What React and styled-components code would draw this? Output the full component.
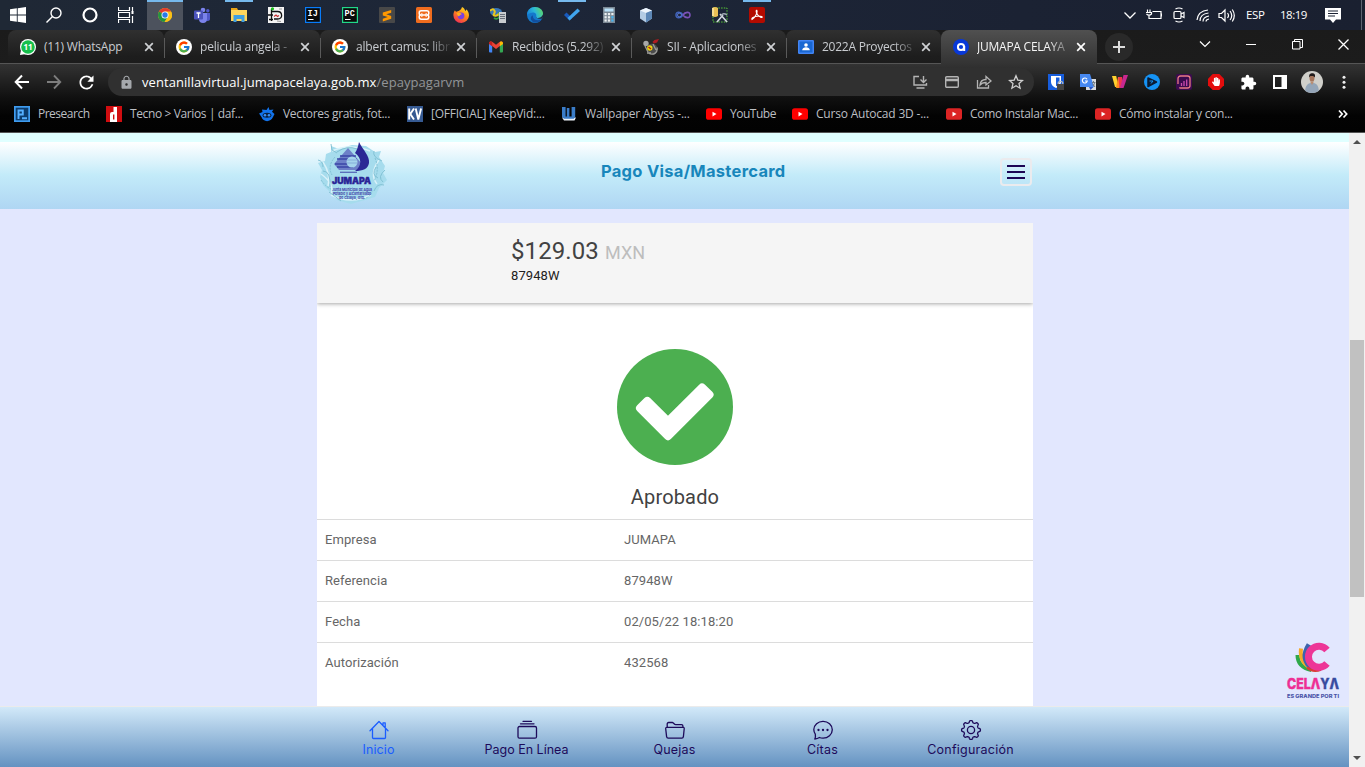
import React from "react";
import styled, { createGlobalStyle, css } from "styled-components";
import { FcGoogle } from "react-icons/fc";
import { FaHandPaper } from "react-icons/fa";
import { MdExtension, MdLock, MdRefresh } from "react-icons/md";

const Global = createGlobalStyle`
  *, *::before, *::after { box-sizing: border-box; }
  body { margin: 0; overflow: hidden; background: #e2e7fe; }
  svg { display: block; flex: none; }
`;

const ui = css`
  font-family: "Open Sans", "Noto Sans", sans-serif;
  white-space: nowrap;
`;

const Screen = styled.div`
  width: 1365px;
  height: 767px;
  display: flex;
  flex-direction: column;
  overflow: hidden;
`;

/* ---------- taskbar ---------- */

const Taskbar = styled.div`
  ${ui}
  flex: none;
  height: 30px;
  display: flex;
  background: linear-gradient(90deg, #1f2835, #1d2638 40%, #1b2233 75%, #1a2030);
  color: #fff;
`;

const SystemButtons = styled.div`
  display: flex;
  width: 147px;
`;

const TaskCell = styled.div`
  width: ${(p) => p.$w || 36}px;
  height: 30px;
  display: flex;
  align-items: center;
  justify-content: center;
`;

const AppCell = styled.div`
  position: relative;
  width: 36px;
  height: 30px;
  margin-right: 1px;
  display: flex;
  align-items: center;
  justify-content: center;
  background: ${(p) => (p.$active ? "#4c525d" : "transparent")};
  &::before {
    content: "";
    display: ${(p) => (p.$running ? "block" : "none")};
    position: absolute;
    top: 0;
    left: ${(p) => (p.$active ? 0 : 4)}px;
    right: ${(p) => (p.$active ? 0 : 4)}px;
    height: 2px;
    background: #76b9ed;
  }
`;

const Tray = styled.div`
  margin-left: auto;
  display: flex;
  align-items: center;
  width: 247px;
`;

const TrayText = styled.span`
  width: ${(p) => p.$w}px;
  padding-left: ${(p) => p.$pad}px;
  font-size: 11.5px;
  letter-spacing: ${(p) => p.$ls}px;
  line-height: 30px;
`;

const DesktopEdge = styled.div`
  width: 1px;
  height: 30px;
  margin-left: 18px;
  background: #5d6370;
`;

/* ---------- browser tabs ---------- */

const TabStrip = styled.div`
  ${ui}
  flex: none;
  height: 34px;
  display: flex;
  padding-left: 8px;
  background: linear-gradient(#1b1b1b, #1c1c1c 97%, #555 97%);
`;

const Tab = styled.div`
  position: relative;
  flex: none;
  width: ${(p) => p.$w}px;
  height: ${(p) => (p.$active ? 34 : 33)}px;
  padding-left: 12px;
  display: flex;
  align-items: center;
  border-radius: 8px 8px 0 0;
  background: ${(p) =>
    p.$active
      ? "linear-gradient(#505050, #333)"
      : "linear-gradient(#303030, #1d1d1d 80%, #1c1c1c)"};
  color: ${(p) => (p.$active ? "#f4f4f4" : "#c9ccd0")};
  &::after {
    content: "";
    display: ${(p) => (p.$rule ? "block" : "none")};
    position: absolute;
    right: -1px;
    top: 8px;
    width: 1px;
    height: 20px;
    background: #5a5a5a;
    z-index: 1;
  }
`;

const TabTitle = styled.span`
  width: ${(p) => p.$w}px;
  margin-left: 8px;
  overflow: hidden;
  font-size: 12px;
  letter-spacing: ${(p) => p.$ls}px;
  line-height: 34px;
  mask-image: ${(p) =>
    p.$fade ? "linear-gradient(90deg, #000 76%, transparent 102%)" : "none"};
`;

const TabClose = styled.span`
  width: 18px;
  height: 34px;
  margin-left: 1px;
  display: flex;
  align-items: center;
  justify-content: center;
`;

const NewTab = styled.div`
  width: 28px;
  height: 28px;
  margin: 3px 0 0 8px;
  border-radius: 50%;
  background: #292929;
  display: flex;
  align-items: center;
  justify-content: center;
`;

const WindowButtons = styled.div`
  margin: 0 -1px 0 auto;
  height: 28px;
  display: flex;
  align-items: center;
`;

const WindowButton = styled.div`
  width: 46px;
  display: flex;
  align-items: center;
  justify-content: center;
`;

/* ---------- toolbar ---------- */

const BrowserBars = styled.div`
  ${ui}
  flex: none;
  height: 69px;
  background: linear-gradient(#333, #101010 50%, #030303 76%, #020202);
  border-bottom: 1px solid #555;
`;

const Toolbar = styled.div`
  height: 36px;
  display: flex;
  align-items: center;
  padding-left: 6px;
`;

const ToolSlot = styled.div`
  width: 32px;
  height: 32px;
  display: flex;
  align-items: center;
  justify-content: center;
`;

const Omnibox = styled.div`
  width: 926px;
  height: 28px;
  margin: 0 6px;
  padding-left: 11px;
  border-radius: 14px;
  background: #303030;
  display: flex;
  align-items: center;
  color: #a5a8ac;
`;

const Url = styled.div`
  flex: 1;
  margin-left: 8px;
  font-size: 13px;
  letter-spacing: 0.06px;
  line-height: 28px;
  color: #929598;
  b {
    font-weight: 400;
    color: #fff;
  }
`;

const OmniActions = styled.div`
  display: flex;
  padding-right: 2px;
`;

const Avatar = styled.div`
  width: 22px;
  height: 22px;
  border-radius: 50%;
  overflow: hidden;
`;

const Bookmarks = styled.div`
  height: 32px;
  display: flex;
  align-items: center;
  padding: 0 17px 2px 14px;
  margin-top: -1px;
`;

const Bookmark = styled.div`
  width: ${(p) => p.$w}px;
  display: flex;
  align-items: center;
  gap: 8px;
  color: #bcbfc3;
  font-size: 12px;
  letter-spacing: ${(p) => p.$ls}px;
  line-height: 30px;
`;

const Overflow = styled.span`
  margin-left: auto;
`;

/* ---------- page ---------- */

const Viewport = styled.div`
  flex: 1;
  min-height: 0;
  display: flex;
`;

const Page = styled.div`
  flex: 1;
  display: flex;
  flex-direction: column;
  background: #e2e7fe;
  position: relative;
`;

const TopBand = styled.div`
  flex: none;
  height: 9px;
  background: #e0ffff;
`;

const Header = styled.header`
  flex: none;
  height: 67px;
  background: linear-gradient(#fff, #c3ebf9 49%, #afd6f3);
`;

const HeaderInner = styled.div`
  width: 716px;
  height: 67px;
  margin-left: calc(50% - 357.5px);
  display: flex;
`;

const LogoBox = styled.div`
  width: 72px;
  margin-top: -2px;
`;

const Title = styled.h1`
  margin: 0 0 0 212px;
  font: 700 16.5px/58px "Inter", sans-serif;
  letter-spacing: 0.28px;
  color: #1886bb;
  white-space: nowrap;
`;

const MenuButton = styled.div`
  width: 32px;
  height: 28px;
  margin: 16px 1px 0 auto;
  border: 2px solid #ebebee;
  border-radius: 4px;
  display: flex;
  flex-direction: column;
  align-items: center;
  justify-content: center;
  gap: 4px;
  i {
    width: 18px;
    height: 2px;
    background: #1b0555;
  }
`;

const Card = styled.main`
  flex: 1;
  width: 716px;
  margin: 14px 0 0 calc(50% - 357.5px);
  background: #fff;
  font-family: Roboto, sans-serif;
`;

const Amount = styled.section`
  height: 80px;
  padding: 13px 0 0 194px;
  background: #f5f5f5;
  box-shadow: 0 1px 4px rgba(0, 0, 0, 0.35);
  clip-path: inset(0 0 -8px 0);
`;

const Price = styled.div`
  font-size: 24px;
  line-height: 30px;
  letter-spacing: 0.1px;
  color: #424242;
  white-space: nowrap;
  small {
    font-size: 18px;
    letter-spacing: 0.1px;
    color: #bdbdbd;
  }
`;

const Account = styled.div`
  margin-top: -2px;
  font-size: 13px;
  line-height: 20px;
  letter-spacing: 0.1px;
  color: #212121;
`;

const Status = styled.section`
  height: 216px;
  display: flex;
  flex-direction: column;
  align-items: center;
  padding-top: 46px;
`;

const StatusText = styled.div`
  margin-top: 20px;
  font-size: 20px;
  line-height: 24px;
  letter-spacing: 0.15px;
  color: #424242;
`;

const Row = styled.div`
  height: 41px;
  border-top: 1px solid #dcdcdc;
  display: flex;
  padding-left: 8px;
  font-size: 13px;
  line-height: 40px;
  letter-spacing: 0.08px;
  color: #666;
`;

const RowLabel = styled.div`
  width: 299px;
`;

const CityBadge = styled.div`
  position: absolute;
  right: 8px;
  bottom: 65px;
`;

const BottomNav = styled.nav`
  flex: none;
  height: 60px;
  display: flex;
  justify-content: center;
  background: linear-gradient(#d2e9f9, #6492c1);
  box-shadow: 0 -1px 0 #ebebeb;
`;

const NavItem = styled.div`
  width: 148px;
  padding-top: 12px;
  display: flex;
  flex-direction: column;
  align-items: center;
  color: ${(p) => (p.$active ? "#1b5dff" : "#1d0a5a")};
  span {
    font: 400 12.5px/18px "Inter", sans-serif;
    letter-spacing: ${(p) => p.$ls}px;
    white-space: nowrap;
  }
`;

const Scrollbar = styled.div`
  width: 16px;
  background: #f1f1f1;
  display: flex;
  flex-direction: column;
  align-items: center;
  padding: 7px 0;
`;

const Thumb = styled.div`
  width: 14px;
  height: 257px;
  margin: 196px 0 auto;
  background: #c1c1c1;
`;

/* ---------- icons ---------- */

const Line = ({ d, s = 16, c = "#fff", w = 1.2, children }) => (
  <svg width={s} height={s} viewBox={`0 0 ${s} ${s}`} fill="none" stroke={c} strokeWidth={w}>
    {d && <path d={d} />}
    {children}
  </svg>
);

const Fill = ({ s = 16, children }) => (
  <svg width={s} height={s} viewBox="0 0 16 16">{children}</svg>
);

const Glyph = ({ children, size = 8, x = 8, y = 11, fill = "#fff", weight = 700, family = "Open Sans, sans-serif" }) => (
  <text x={x} y={y} fontSize={size} fill={fill} fontWeight={weight} textAnchor="middle" fontFamily={family}>
    {children}
  </text>
);

const Chrome = () => (
  <Fill s={14}>
    <circle cx="8" cy="8" r="8" fill="#fbc116" />
    <path d="M8 8 1.1 4A8 8 0 0 1 14.9 4Z" fill="#e33b2e" />
    <path d="M8 8 1.1 4A8 8 0 0 0 7.5 16L11.4 10Z" fill="#229342" />
    <path d="M8 4h6.9A8 8 0 0 1 7.5 16l3.9-6Z" fill="#fbc116" />
    <circle cx="8" cy="8" r="4" fill="#fff" />
    <circle cx="8" cy="8" r="3.1" fill="#2979e8" />
  </Fill>
);

const Teams = () => (
  <Fill>
    <circle cx="9" cy="3" r="2.3" fill="#7b83eb" />
    <circle cx="13.8" cy="3.8" r="1.7" fill="#5059c9" />
    <path d="M11 6h5v5a2.5 2.5 0 0 1-5 1Z" fill="#5059c9" />
    <path d="M5 6h8v6a4 4 0 0 1-8 0Z" fill="#7b83eb" />
    <rect x="0" y="3.5" width="9" height="9" rx="1" fill="#4b53bc" />
    <path d="M2.5 6h4M4.5 6v5" stroke="#fff" strokeWidth="1.3" />
  </Fill>
);

const Explorer = () => (
  <Fill>
    <path d="M0 1h6l1 2h8v4H0Z" fill="#e8a317" />
    <rect x="0" y="3" width="16" height="11" fill="#ffd65c" />
    <path d="M2.5 15V8h11v7h-3v-3h-5v3Z" fill="#3f9fe0" />
  </Fill>
);

const RApp = () => (
  <Fill>
    <rect width="16" height="16" fill="#f4f4f4" />
    <path d="M3 4.500h6.500c5 0 6 7.500 0 7.500H6M0 8h5M1 12.500h4M3.500 2v12" fill="none" stroke="#111" strokeWidth="1.300" />
    <path d="M6 9.500l2-1.500 1.500 1.500 1.500-1" stroke="#c83030" strokeWidth="1.200" fill="none" />
    <path d="M9 14l4 .5M11 2h3" stroke="#999" />
    <circle cx="4.500" cy="1.800" r="1.600" fill="#18c018" />
  </Fill>
);

const Ide = ({ label, color }) => (
  <Fill>
    <rect x=".6" y=".6" width="14.800" height="14.800" fill="#0a0a0a" stroke={color} strokeWidth="1.200" />
    <Glyph size={8.5} x={7.7} y={8.8} family="Liberation Mono, monospace">{label}</Glyph>
    <path d="M3 12.500h5.500" stroke="#fff" />
  </Fill>
);

const Sublime = () => (
  <Fill>
    <rect width="16" height="16" rx="1" fill="#484848" />
    <path d="M12.200 3 3.800 5.600v2.900l5 1.600-5 1.600v2.700l8.400-2.700V8.900L7.300 7.300l4.900-1.500Z" fill="#ff9800" />
  </Fill>
);

const Xampp = () => (
  <Fill>
    <rect width="16" height="16" rx="1.500" fill="#ef6c1e" />
    <path d="M5.200 3.800h5.600q2 0 2 2.100T11 8q1.800 0 1.800 2.100t-2 2.100H5.200q-2 0-2-2.100T5 8Q3.200 8 3.200 5.900t2-2.100Z" fill="none" stroke="#fff" strokeWidth="1.500" />
    <path d="M5.800 6.200v3.600M10.200 6.200v3.600M5.800 8h4.400" stroke="#fff" strokeWidth="1.300" />
  </Fill>
);

const Firefox = () => (
  <Fill>
    <defs>
      <linearGradient id="ff" x1=".8" y1="0" x2=".2" y2="1">
        <stop offset="0" stopColor="#ffe226" />
        <stop offset=".45" stopColor="#ff8a16" />
        <stop offset="1" stopColor="#f0285a" />
      </linearGradient>
    </defs>
    <path d="M9 0c2 1 3 2.500 3.200 4 1-.4 1-1.300 1-1.700C15 4 16 6 16 8.500A7.700 7.700 0 0 1 8.200 16 7.800 7.800 0 0 1 .4 8C.4 6 1 4.500 2 3.200c.3 1 .7 1.300 1.300 1.600C5 3.800 8 4 9 0Z" fill="url(#ff)" />
    <circle cx="8" cy="8.800" r="3.400" fill="#7b3fe0" />
    <path d="M3.500 6c2-.5 4 0 5.500 1.200-2 0-1.800 2-4 2Z" fill="#ffae1c" />
  </Fill>
);

const NetApp = () => (
  <Fill>
    <ellipse cx="6" cy="5" rx="6" ry="4" fill="#3776b8" />
    <path d="M0 4c3-4 6 0 4 3S9 9 9 6" fill="none" stroke="#eac71d" strokeWidth="2" />
    <path d="M4 11c3 2 7 0 5-6" fill="none" stroke="#30a640" strokeWidth="1.6" />
    <rect x="9" y="5" width="7" height="11" fill="#c8ccd0" />
    <path d="M10 7.500h5M10 9.500h5M10 11.500h5" stroke="#5c6470" strokeWidth=".9" />
  </Fill>
);

const Edge = () => (
  <Fill>
    <defs>
      <linearGradient id="edge" x1="0" y1=".6" x2="1" y2=".3">
        <stop offset="0" stopColor="#1683d8" />
        <stop offset=".5" stopColor="#2cb8d8" />
        <stop offset="1" stopColor="#5ed864" />
      </linearGradient>
    </defs>
    <circle cx="8" cy="8" r="8" fill="#1478cc" />
    <path d="M0 8C0 3.500 3.500 0 8 0s8 3 8 6.500S13 11 11 11s-2.200-1-1.800-1.800C10 7 8 5.400 5.800 5.400 2.500 5.400.3 7.800 0 8Z" fill="url(#edge)" />
    <path d="M6 8.500c-1 4 4 6 8.600 4C13 15 9 16.500 6 15 2.500 12.500 3.500 9 6 8.500Z" fill="#124f9f" />
    <path d="M9.200 9.200C8.700 10.300 10.500 12.300 15 11.400L16 10v-2.500C15 10 13 11 11 11s-2.200-1-1.800-1.800Z" fill="#1f2838" />
  </Fill>
);

const Todo = () => (
  <Fill>
    <path d="m0 8 2.500-2.500 5.500 5.500L5.500 13.500Z" fill="#185abd" />
    <path d="m5.500 13.500-2-2.500L13.500 1.500 16 4Z" fill="#41a5ee" />
  </Fill>
);

const Calculator = () => (
  <Fill>
    <rect x="2" y="0" width="12" height="16" fill="#7b8894" />
    <rect x="3.500" y="1.500" width="9" height="3" fill="#b9e1fa" />
    {[6, 9.2, 12.4].map((y) =>
      [3.5, 6.9, 10.3].map((x) => (
        <rect key={`${x}-${y}`} x={x} y={y} width="2.200" height="2.200" fill={x > 10 && y > 6 ? "#43b2f0" : "#eceff2"} />
      ))
    )}
  </Fill>
);

const VBox = () => (
  <Fill>
    <path d="M8 1l6 2.500v8L8 15.500 2 11.500v-8Z" fill="#b4cce4" />
    <path d="M8 1l6 2.500L8 6 2 3.500Z" fill="#eef5fc" />
    <path d="M8 6l6-2.500v8L8 15.500Z" fill="#5d87b6" />
  </Fill>
);

const InfinityIcon = () => (
  <Line w={1.6} c="#7359c8">
    <path d="M8 8C6 5 1 4 1 8s5 3 7 0" stroke="#3f62b8" />
    <path d="M8 8c2-3 7-4 7 0s-5 3-7 0" stroke="#7b52b8" />
    <circle cx="4.500" cy="8" r="2" stroke="#5876d0" strokeWidth="1" />
  </Line>
);

const Tools = () => (
  <Fill>
    <rect x="1" y="1" width="14" height="14" fill="none" stroke="#58c838" strokeDasharray="1.500 1.200" />
    <path d="M0 1q3-2 6 0v8q-3 2-6 0Z" fill="#e9bf54" />
    <path d="M1 1v8" stroke="#f8e4a4" strokeWidth="1.500" />
    <path d="M5 15l6-7M8 7l7 8" stroke="#d2d7dd" strokeWidth="1.600" />
    <path d="M9 9q2-4 6-1" fill="none" stroke="#9fa8b2" strokeWidth="1.500" />
  </Fill>
);

const Acrobat = () => (
  <Fill>
    <rect width="16" height="16" rx="2" fill="#b30b00" />
    <path d="M3 12.500C6 11 9 5 7.800 3.300 6.500 3 7 8 12 10.500c3 0 0-2-4-1.200-3 .4-6 1.700-5 3.200Z" fill="none" stroke="#fff" strokeWidth="1.100" />
  </Fill>
);

const WhatsApp = () => (
  <Fill>
    <circle cx="8" cy="8" r="8" fill="#fff" />
    <path d="M0 16l1-5 5 4Z" fill="#fff" />
    <circle cx="8" cy="8" r="6.800" fill="#16bf4c" />
    <Glyph size={8} y={11}>11</Glyph>
  </Fill>
);

const Google = () => (
  <Fill>
    <circle cx="8" cy="8" r="8" fill="#fff" />
    <svg x="1.500" y="1.500" width="13" height="13"><FcGoogle size={13} /></svg>
  </Fill>
);

const Gmail = () => (
  <Fill>
    <path d="M1 4h3.200v9.500H2a1 1 0 0 1-1-1Z" fill="#4285f4" />
    <path d="M11.800 4H15v8.500a1 1 0 0 1-1 1h-2.200Z" fill="#34a853" />
    <path d="M1 4.500C1 2 3.500 2 4.500 3L8 5.700 11.500 3C13 2 15 2.300 15 4.500L8 10Z" fill="#ea4335" />
    <path d="M1 4.500C1 2.500 3 2.200 4.200 3v4.200L1 5Z" fill="#c5221f" />
    <path d="M15 4.500C15 2.500 13 2.200 11.800 3v4.200L15 5Z" fill="#fbbc04" />
  </Fill>
);

const Sii = () => (
  <Fill>
    <circle cx="9" cy="10" r="5.500" fill="#4c4c4c" />
    <circle cx="3" cy="4.500" r="2.700" fill="#a8a8a8" />
    <path d="M6 14.500c5 2 9-1 8-6M2 7l3 6M10 5l3 6M4 14h4" fill="none" stroke="#9c9c98" strokeWidth="1.300" />
    <circle cx="6.800" cy="9" r="2.700" fill="#ead412" />
    <path d="M5.500 8l2.500 2" stroke="#b91d12" strokeWidth="1.500" />
    <path d="M9.500 3l2-2 4.500-1-2 3.500-3 1Z" fill="#b01c22" />
  </Fill>
);

const Classroom = () => (
  <Fill>
    <rect y="1" width="16" height="14" rx="1.200" fill="#4285f4" />
    <rect x="1.500" y="2.500" width="13" height="11" fill="#1967d2" />
    <circle cx="8" cy="6" r="1.800" fill="#fff" />
    <path d="M4.200 11.300c0-4 7.600-4 7.600 0Z" fill="#fff" />
  </Fill>
);

const AppA = () => (
  <Fill>
    <circle cx="8" cy="8" r="8" fill="#0838d8" />
    <circle cx="8" cy="8" r="3.100" fill="none" stroke="#fff" strokeWidth="2" />
    <path d="M11.200 7v5" stroke="#fff" strokeWidth="2" />
  </Fill>
);

const YouTube = ({ c = "#ff0000" }) => (
  <Fill>
    <rect y="2.300" width="16" height="11.500" rx="2.600" fill={c} />
    <path d="M6.500 5.700v4.700L10.500 8Z" fill="#fff" />
  </Fill>
);

const Presearch = () => (
  <Fill>
    <rect width="16" height="16" fill="#3f9cf0" />
    <rect x="1.700" y="1.700" width="12.600" height="12.600" fill="#0d3d6e" />
    <path d="M4.500 13V4.500h4.300v4H4.500M8 12.300h5" fill="none" stroke="#55b0ff" strokeWidth="1.900" />
  </Fill>
);

const Dafont = () => (
  <Fill>
    <rect width="16" height="16" fill="#d00d10" />
    <path d="M7.500 1H11v15H4V8q0-2 2-2h1.500Z" fill="#fff" />
    <rect x="7" y="8.500" width="1.400" height="5" fill="#d00d10" />
  </Fill>
);

const Freepik = () => (
  <Fill>
    <path d="M3 3.500 7.500 4l2-3 1 3 4-.5-1.500 2.300 2.500 2.200-1.500 3c-2 5.500-10 5.500-11.500 0L0 7.500 3.500 6Z" fill="#1273eb" />
    <ellipse cx="8" cy="9.300" rx="4.400" ry="2.500" fill="#09213f" />
    <circle cx="6" cy="9.200" r="1.300" fill="#3a90f8" />
    <circle cx="10" cy="9.200" r="1.300" fill="#3a90f8" />
  </Fill>
);

const KeepVid = () => (
  <Fill>
    <rect width="16" height="16" fill="#365a92" />
    <path d="M2.200 2.500v11M7 2.500 3.300 8 7 13.500M8.700 2.500l2.600 11 2.800-11" fill="none" stroke="#fff" strokeWidth="1.900" />
  </Fill>
);

const Abyss = () => (
  <Fill>
    <path d="M1 11.500h14l-1.500 3H3Z" fill="#eef3fa" />
    <path d="M1 1h3.600v9.500h1.200V2h2.600v8.500h2.200V1h3.600v10l-1.500 1.800H3L1 11Z" fill="#3a7cc8" />
  </Fill>
);

const Bitwarden = () => (
  <Fill>
    <rect width="16" height="16" fill="#175ddc" />
    <path d="M3 2h10v6c0 3-2.500 5-5 6-2.500-1-5-3-5-6Z" fill="#fff" />
    <path d="M8 3.500h3.500V8c0 2-1.500 3.300-3.500 4.300Z" fill="#175ddc" />
    <path d="M10.300 10.500V8.500q2.200-2.500 4.400 0v2" stroke="#b8b8b8" fill="none" strokeWidth="1.200" />
    <rect x="9" y="10" width="7" height="6" fill="#444" />
  </Fill>
);

const Translate = () => (
  <Fill>
    <rect x="6" y="5" width="10" height="11" fill="#d8dbe0" />
    <path d="M0 0h10l4 13H0Z" fill="#4688f1" />
    <path d="M9 13h4.500L10.500 16Z" fill="#2a56c6" />
    <path d="M7 5.200A2.500 2.500 0 1 0 7.300 7H5" fill="none" stroke="#fff" strokeWidth="1.200" />
    <path d="M12 8.500h3.500M13.500 7v1.500M14.500 9q-.5 2-1.500 3M12.500 9.500l2.500 3.500" fill="none" stroke="#6c7680" strokeWidth=".9" />
  </Fill>
);

const WApp = () => (
  <Fill>
    <path d="M0 2h4.200l2.300 11H3Z" fill="#ffd12e" />
    <path d="M4 14 6 3h4l-2.500 11Z" fill="#ff8a21" />
    <path d="M6.300 3H10l1 11H7.500Z" fill="#f0354e" />
    <path d="M11.500 1H16L11.500 14H8Z" fill="#c82890" />
  </Fill>
);

const PlayApp = () => (
  <Fill>
    <circle cx="8" cy="8" r="8" fill="#1593f5" />
    <path d="M4 4v8.500L12.500 8Z" fill="#0b1c35" stroke="#0b1c35" strokeWidth="1.500" strokeLinejoin="round" />
    <path d="M5.500 7H9L7 9.500" fill="none" stroke="#1593f5" />
  </Fill>
);

const StatsApp = () => (
  <Fill>
    <rect width="16" height="16" rx="2" fill="#3b0b4f" />
    <rect x="2" y="2" width="12" height="12" rx="2.500" fill="none" stroke="#e87a86" strokeWidth="1.300" strokeDasharray="30 4" />
    <path d="M5.500 9v3M8 7v5M10.700 5.500v6.500" stroke="#c94cae" strokeWidth="1.300" />
  </Fill>
);

const Blocker = () => (
  <Fill>
    <path d="M4.700 0h6.600L16 4.700v6.600L11.300 16H4.700L0 11.300V4.700Z" fill="#e40d0d" />
    <svg x="3.500" y="3" width="9" height="10"><FaHandPaper size={9} color="#fff" /></svg>
  </Fill>
);

const Portrait = () => (
  <svg width="22" height="22" viewBox="0 0 22 22">
    <rect width="22" height="22" fill="#d0cfca" />
    <path d="M4 22c0-8 3-9 5-10h4c3 1 5 3 5 10Z" fill="#94a5b8" />
    <path d="m9 10.500 2 3.500 2-3.500" fill="#b88c72" />
    <ellipse cx="11" cy="7" rx="2.500" ry="3.600" fill="#a6755b" />
    <path d="M8.300 6.500C7.500 2.500 10 2 12 2.200c2 .3 2.500 2 1.800 4.300-1-2-3.500-1.500-4.500-1.500Z" fill="#211b1b" />
  </svg>
);

const JumapaLogo = () => (
  <svg width="72" height="66" viewBox="0 0 72 66">
    <path d="M14 6l8 3 13-4 14 1 9 6 6-1-2 6 6 9-2 7 4 7-8 8-4 9-10 3-14 4-14-4-6-7-8-8-3-8 2-7-4-7 7-2 1-7 5-2Z" fill="#a6dced" />
    <g fill="none" stroke="#d9f2fa" strokeWidth="1.500">
      <path d="M6 22q8 12 5 24M15 11q18-8 38 0M62 20q-10 14-2 24M14 55q20 10 40 0M4 34q14 10 10 20" />
    </g>
    <g fill="none" stroke="#7dbdd0" strokeWidth=".9">
      <path d="M1 20q5 1 5 7M14 4l1 6 5 3M6 31q8 0 7 16M57 11q-2 6 8 10M68 30q-8 7-2 12M12 52q7 5 12 9M67 45q-7-2-10 6M20 12q10-7 20-3M59 27q-5 8 2 11" />
      <path d="M18 17q-8 9-3 18M58 18q5 12-1 23M4 40q5 7 10 9M46 59q8-2 9-8" strokeDasharray="2 1" />
    </g>
    <path d="M31 8 45 24 40 30H22l-5-6Z" fill="#6d80c8" />
    <path d="M23 16h16M20 19h20M18 24h16M20 27h16" stroke="#3a45a6" strokeWidth="1.500" />
    <circle cx="35" cy="22" r="5.500" fill="#a5d4ec" />
    <path d="M30 20h10M30 23h10" stroke="#7da5d6" strokeWidth=".8" />
    <path d="M23 32.300h17" stroke="#5669b8" strokeWidth="1.300" />
    <path d="M42 2C46 10 53 16 52 23c-1 6-6 8-14 8 7-5 7-13 0-18 2-3 3-6 4-11Z" fill="#2b2795" />
    <text x="15" y="44" textLength="39" lengthAdjust="spacingAndGlyphs" fontFamily="Inter, sans-serif" fontSize="9" fontWeight="900" fill="#2a2596" stroke="#2a2596" strokeWidth=".4">JUMAPA</text>
    <g fontFamily="Inter, sans-serif" fontSize="3.800" fontWeight="600" fill="#3634a0">
      <text x="15" y="51.300" textLength="40" lengthAdjust="spacingAndGlyphs">Junta Municipal de Agua</text>
      <text x="16" y="55.200" textLength="38" lengthAdjust="spacingAndGlyphs">Potable y Alcantarillado</text>
      <text x="22" y="59.200" textLength="26" lengthAdjust="spacingAndGlyphs">de Celaya, Gto.</text>
    </g>
  </svg>
);

const CelayaLogo = () => (
  <svg width="56" height="60" viewBox="0 0 56 60">
    <g fill="none">
      <path d="M12.500 13q0 12 14 15" stroke="#2fa84a" strokeWidth="4" />
      <path d="M16 6.500q-2 15 13 21" stroke="#f7a928" strokeWidth="4" />
      <path d="M24 2.500q-9 14 3 24" stroke="#3d63ad" strokeWidth="5" />
      <path d="M22 25.500q6 5 14 2" stroke="#d83c38" strokeWidth="2.500" />
      <path d="M42 8A10.500 10.500 0 1 0 42 21.500" stroke="#ed3697" strokeWidth="7" />
    </g>
    <text x="2" y="46.500" textLength="52" lengthAdjust="spacingAndGlyphs" fontFamily="Inter, sans-serif" fontSize="14" fontWeight="800" fill="#ee2f94" stroke="#ee2f94" strokeWidth=".4">
      CELΛ<tspan fill="#374b9f" stroke="#374b9f">YΛ</tspan>
    </text>
    <text x="2" y="56" textLength="52" lengthAdjust="spacingAndGlyphs" fontFamily="Inter, sans-serif" fontSize="5.300" fontWeight="800" fill="#4a55a8">ES GRANDE POR TI</text>
  </svg>
);

const Approved = () => (
  <svg width="116" height="116" viewBox="0 0 116 116">
    <circle cx="58" cy="58" r="58" fill="#4caf50" />
    <path d="M23 59.200 30.300 51.900 51 72.400 85 38.500 92.500 45.700 51 87.200Z" fill="#fff" stroke="#fff" strokeWidth="8" strokeLinejoin="round" />
  </svg>
);

const NavGlyph = ({ children }) => (
  <svg width="22" height="22" viewBox="0 0 22 22" fill="none" stroke="currentColor" strokeWidth="1.300" strokeLinejoin="round" strokeLinecap="round">
    {children}
  </svg>
);

const HomeIcon = () => (
  <NavGlyph>
    <path d="M2 11.700 11 2.500l9 9.200M4.500 9.500v9q0 1 1 1h11q1 0 1-1v-9M15 6V3.800h2.200V8.500" />
  </NavGlyph>
);

const AlbumsIcon = () => (
  <NavGlyph>
    <rect x="2" y="7.500" width="18.500" height="11.700" rx="1.500" />
    <path d="M4.500 4.800h13.500M7 2.300h8.500" />
  </NavGlyph>
);

const FolderIcon = () => (
  <NavGlyph>
    <path d="M3.200 8.300V5q0-1.500 1.500-1.500h3.600q.6 0 1 .5l1.300 1.300q.3.300 1 .3h5.900q1.400 0 1.400 1.400v1.300" />
    <path d="M3 8.300h16q1.400 0 1.200 1.400l-.8 8q-.2 1.500-1.500 1.500H4.200q-1.400 0-1.600-1.500l-.9-8Q1.600 8.300 3 8.300Z" />
  </NavGlyph>
);

const ChatIcon = () => (
  <NavGlyph>
    <path d="M3.300 15.200A8.700 8.700 0 0 1 1.800 10.500 9.100 8.400 0 0 1 11 2.300a9.200 8.500 0 0 1 9.300 8.500 9.200 8.500 0 0 1-9.300 8.400q-2 0-3.600-.7-2 1.300-4.600 1.500 1-2 .5-4.800Z" />
    <g fill="currentColor" stroke="none">
      <circle cx="6.500" cy="11" r="1.150" />
      <circle cx="11" cy="11" r="1.150" />
      <circle cx="15.500" cy="11" r="1.150" />
    </g>
  </NavGlyph>
);

const gearPath =
  Array.from({ length: 96 }, (_, i) => {
    const a = (i / 96) * Math.PI * 2;
    const wave = Math.tanh(2.2 * Math.cos(8 * a));
    const r = 8.4 + wave * 1.05;
    return `${i ? "L" : "M"}${(11 + r * Math.sin(a)).toFixed(2)} ${(11 - r * Math.cos(a)).toFixed(2)}`;
  }).join("") + "Z";

const GearIcon = () => (
  <NavGlyph>
    <path d={gearPath} />
    <circle cx="11" cy="11" r="3.600" />
  </NavGlyph>
);

/* ---------- data ---------- */

const apps = [
  { icon: <Chrome />, active: true, running: true },
  { icon: <Teams /> },
  { icon: <Explorer />, running: true },
  { icon: <RApp /> },
  { icon: <Ide label="IJ" color="#087cfa" /> },
  { icon: <Ide label="PC" color="#21d789" /> },
  { icon: <Sublime /> },
  { icon: <Xampp /> },
  { icon: <Firefox /> },
  { icon: <NetApp /> },
  { icon: <Edge /> },
  { icon: <Todo />, running: true },
  { icon: <Calculator /> },
  { icon: <VBox /> },
  { icon: <InfinityIcon /> },
  { icon: <Tools /> },
  { icon: <Acrobat />, running: true },
];

const tabs = [
  { icon: <WhatsApp />, title: "(11) WhatsApp", w: 156, tw: 95, rule: true, ls: -0.22 },
  { icon: <Google />, title: "pelicula angela -", w: 156, tw: 95, rule: true, fade: true, ls: -0.18 },
  { icon: <Google />, title: "albert camus: libr", w: 156, tw: 95, rule: true, fade: true, ls: -0.2 },
  { icon: <Gmail />, title: "Recibidos (5.292)", w: 155, tw: 94, rule: true, fade: true, ls: -0.2 },
  { icon: <Sii />, title: "SII - Aplicaciones", w: 155, tw: 94, rule: true, fade: true, ls: -0.18 },
  { icon: <Classroom />, title: "2022A Proyectos", w: 155, tw: 94, fade: true, ls: -0.24 },
  { icon: <AppA />, title: "JUMAPA CELAYA", w: 156, tw: 94, active: true, fade: true, ls: -0.24 },
];

const bookmarks = [
  { icon: <Presearch />, text: "Presearch", w: 92, ls: -0.5 },
  { icon: <Dafont />, text: "Tecno > Varios | daf...", w: 153, ls: -0.38 },
  { icon: <Freepik />, text: "Vectores gratis, fot...", w: 148, ls: -0.3 },
  { icon: <KeepVid />, text: "[OFFICIAL] KeepVid:...", w: 154, ls: -0.25 },
  { icon: <Abyss />, text: "Wallpaper Abyss -...", w: 145, ls: -0.2 },
  { icon: <YouTube />, text: "YouTube", w: 86, ls: -0.48 },
  { icon: <YouTube />, text: "Curso Autocad 3D -...", w: 154, ls: -0.2 },
  { icon: <YouTube c="#dc2424" />, text: "Como Instalar Mac...", w: 149, ls: -0.3 },
  { icon: <YouTube c="#dc2424" />, text: "Cómo instalar y con...", w: 150, ls: -0.28 },
];

const extensions = [
  <Bitwarden />, <Translate />, <WApp />, <PlayApp />, <StatsApp />, <Blocker />,
  <MdExtension size={17} color="#fff" />,
  <Line w={2}><path d="M2 2h12v12H2Z" /><path d="M11.500 2v12" strokeWidth="4" /></Line>,
  <Avatar><Portrait /></Avatar>,
  <Fill><circle cx="8" cy="3.300" r="1.500" fill="#eee" /><circle cx="8" cy="8.300" r="1.500" fill="#eee" /><circle cx="8" cy="13.300" r="1.500" fill="#eee" /></Fill>,
];

const details = [
  ["Empresa", "JUMAPA"],
  ["Referencia", "87948W"],
  ["Fecha", "02/05/22 18:18:20"],
  ["Autorización", "432568"],
];

const navItems = [
  { Icon: HomeIcon, label: "Inicio", active: true, ls: 0.1 },
  { Icon: AlbumsIcon, label: "Pago En Línea", ls: 0 },
  { Icon: FolderIcon, label: "Quejas", ls: 0.2 },
  { Icon: ChatIcon, label: "Cítas", ls: 0.2 },
  { Icon: GearIcon, label: "Configuración", ls: 0.25 },
];

export default function App() {
  return (
    <Screen>
      <Global />
      <Taskbar>
        <SystemButtons>
          <TaskCell>
            <Fill><path d="M0 2.300 6.800 1.300V7.600H0ZM7.700 1.200 16 0v7.600H7.700ZM0 8.500h6.800v6.300L0 13.800ZM7.700 8.500H16V16l-8.300-1.200Z" fill="#fff" /></Fill>
          </TaskCell>
          <TaskCell><Line w={1.4}><circle cx="10" cy="6" r="5" /><path d="M6.500 9.500.5 15.500" /></Line></TaskCell>
          <TaskCell><Line w={2.2}><circle cx="8" cy="8" r="6.500" /></Line></TaskCell>
          <TaskCell>
            <Line w={1.2}><path d="M.5 0v3.500h11V0M.5 16v-3.500h11V16M.5 5.500h11v5H.5ZM14.500 0v5M14.500 9v7" /><rect x="13.500" y="4" width="2" height="3" fill="#fff" stroke="none" /></Line>
          </TaskCell>
        </SystemButtons>
        {apps.map((a, i) => (
          <AppCell key={i} $active={a.active} $running={a.running}>{a.icon}</AppCell>
        ))}
        <Tray>
          <TaskCell $w={24}><Line s={14} w={1.3} d="M1.500 4.500 7 10l5.500-5.500" /></TaskCell>
          <TaskCell $w={24}><Line w={1.2} d="M6.500 4.500h8.500v7H5.500M1.500 2.500v2.500M4 2.500v2.500M0 5.500h5.500v1.500q-2.500 2.500-5 0M3 8.500v3h3M15.500 6.500v3" /></TaskCell>
          <TaskCell $w={25}><Line w={1.2}><rect x="3" y="4.500" width="7" height="7" rx="1" /><path d="m10 7 3-1.500v5L10 9M4.500 2Q8 0 11.500 2M4.500 14q3.500 2 7 0" /></Line></TaskCell>
          <TaskCell $w={24}><Line w={1.2} d="M2 13Q3 4 13 3M5 14Q5 7 13.500 6M8 14.500q0-4.500 6-5.500M11 14.500q0-2 3-2.500" /></TaskCell>
          <TaskCell $w={23}><Line s={17} w={1.2} d="M1 6.500h2.500L7 3v11l-3.500-3.500H1ZM9.500 6q2 2.500 0 5M12 4q3.500 4.500 0 9M14.300 2.500q4 6 0 12" /></TaskCell>
          <TrayText $w={35} $pad={8} $ls={-0.3}>ESP</TrayText>
          <TrayText $w={50} $pad={7} $ls={-0.5}>18:19</TrayText>
          <TaskCell $w={20}><Fill><path d="M0 1h16v11.500h-5L8 16l-3-3.500H0Z" fill="#fff" /><path d="M3 4h10M3 6.500h10M3 9h7" stroke="#1b2233" /></Fill></TaskCell>
          <DesktopEdge />
        </Tray>
      </Taskbar>

      <TabStrip>
        {tabs.map((t) => (
          <Tab key={t.title} $active={t.active} $rule={t.rule} $w={t.w}>
            {t.icon}
            <TabTitle $fade={t.fade} $ls={t.ls} $w={t.tw}>{t.title}</TabTitle>
            <TabClose><Line s={10} w={1.7} c={t.active ? "#fff" : "#cfd1d4"} d="m1.200 1.200 7.600 7.600m0-7.600L1.200 8.800" /></TabClose>
          </Tab>
        ))}
        <NewTab><Line s={12} w={2} c="#dcdcdc" d="M6 0v12M0 6h12" /></NewTab>
        <WindowButtons>
          <WindowButton><Line s={12} d="m1 3.500 5 5 5-5" /></WindowButton>
          <WindowButton><Line s={10} w={1} d="M0 5.500h10" /></WindowButton>
          <WindowButton><Line s={11} w={1}><path d="M.5 2.500h7.500v7.500H.5ZM2.500 2.500v-2h8v8H8" /></Line></WindowButton>
          <WindowButton><Line s={11} w={1.3} d="m.5.5 10 10m0-10-10 10" /></WindowButton>
        </WindowButtons>
      </TabStrip>

      <BrowserBars>
        <Toolbar>
          <ToolSlot><Line w={2} d="M15 8H2M8 1.500 1.700 8 8 14.500" /></ToolSlot>
          <ToolSlot><Line w={1.8} c="#7d7d7d" d="M1 8h13M8 1.500 14.300 8 8 14.500" /></ToolSlot>
          <ToolSlot><MdRefresh size={21} color="#fff" /></ToolSlot>
          <Omnibox>
            <MdLock size={15} />
            <Url><b>ventanillavirtual.jumapacelaya.gob.mx</b>/epaypagarvm</Url>
            <OmniActions>
              <ToolSlot><Line w={1.4} c="#b4b4b4" d="M7 2.500H2v8.500h12.500V9M4.500 14h8M11.500 2v6M8.500 5.500l3 3 3-3" /></ToolSlot>
              <ToolSlot><Line w={1.4} c="#b4b4b4"><rect x="1.700" y="2.700" width="12.600" height="10.600" rx="1" /><path d="M2 6h12" strokeWidth="2.500" /></Line></ToolSlot>
              <ToolSlot><Line w={1.3} c="#b4b4b4" d="M1.500 6v8h11v-3M4 11q.5-5.500 6-5.500V2.500l5 4.500-5 4V8.500q-4 0-6 2.500Z" /></ToolSlot>
              <ToolSlot><Line w={1.3} c="#d0d0d0" d="m8 1.800 1.800 4.300 4.700.4L11 9.600l1.100 4.600L8 11.700l-4.100 2.500L5 9.600 1.500 6.500l4.700-.4Z" /></ToolSlot>
            </OmniActions>
          </Omnibox>
          {extensions.map((x, i) => <ToolSlot key={i}>{x}</ToolSlot>)}
        </Toolbar>
        <Bookmarks>
          {bookmarks.map((b) => (
            <Bookmark key={b.text} $w={b.w} $ls={b.ls}>{b.icon}{b.text}</Bookmark>
          ))}
          <Overflow><Line s={10} w={1.7} d="m1 1.500 3.200 3.500L1 8.500M5.500 1.500 8.700 5 5.500 8.500" /></Overflow>
        </Bookmarks>
      </BrowserBars>

      <Viewport>
        <Page>
          <TopBand />
          <Header>
            <HeaderInner>
              <LogoBox><JumapaLogo /></LogoBox>
              <Title>Pago Visa/Mastercard</Title>
              <MenuButton><i /><i /><i /></MenuButton>
            </HeaderInner>
          </Header>
          <Card>
            <Amount>
              <Price>$129.03 <small>MXN</small></Price>
              <Account>87948W</Account>
            </Amount>
            <Status>
              <Approved />
              <StatusText>Aprobado</StatusText>
            </Status>
            {details.map(([k, v]) => (
              <Row key={k}><RowLabel>{k}</RowLabel><div>{v}</div></Row>
            ))}
          </Card>
          <CityBadge><CelayaLogo /></CityBadge>
          <BottomNav>
            {navItems.map(({ Icon, label, active, ls }) => (
              <NavItem key={label} $active={active} $ls={ls}>
                <Icon />
                <span>{label}</span>
              </NavItem>
            ))}
          </BottomNav>
        </Page>
        <Scrollbar>
          <svg width="8" height="4" viewBox="0 0 8 4"><path d="M0 4 4 0l4 4Z" fill="#505050" /></svg>
          <Thumb />
          <svg width="8" height="4" viewBox="0 0 8 4"><path d="M0 0h8L4 4Z" fill="#505050" /></svg>
        </Scrollbar>
      </Viewport>
    </Screen>
  );
}
